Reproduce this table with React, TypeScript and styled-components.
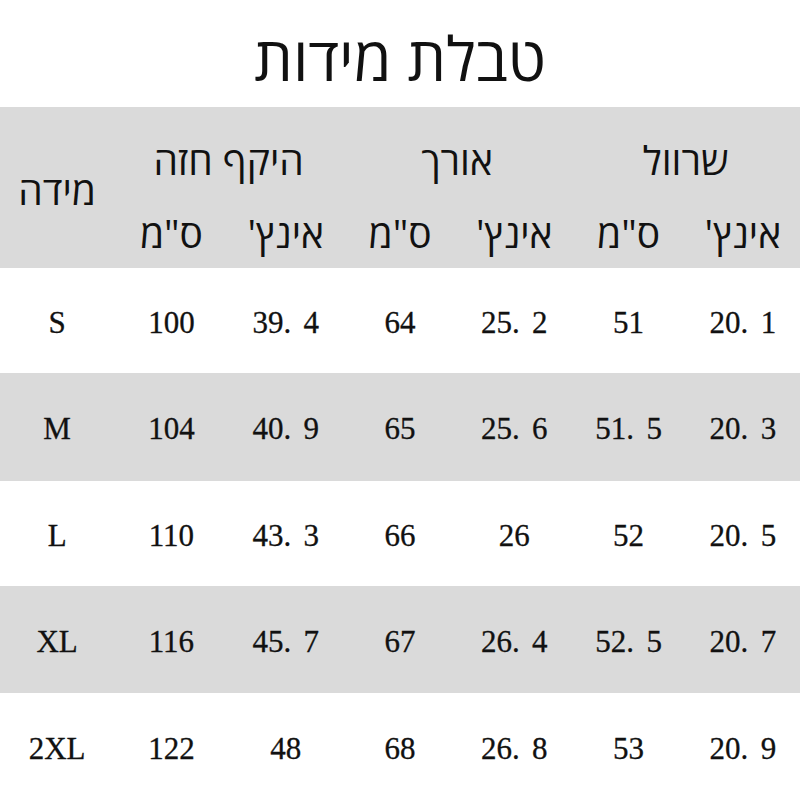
import React from 'react';
import styled, { createGlobalStyle } from 'styled-components';

const GlobalStyle = createGlobalStyle`
  html, body {
    margin: 0;
    padding: 0;
    background: #ffffff;
  }
`;

const Page = styled.div`
  width: 800px;
  height: 800px;
  overflow: hidden;
  display: flex;
  flex-direction: column;
  background: #ffffff;
`;

const Title = styled.h1`
  height: 107px;
  margin: 0;
  display: flex;
  align-items: center;
  justify-content: center;
  font-family: "Open Sans", "DejaVu Sans", sans-serif;
  font-size: 61px;
  font-weight: 400;
  color: #111111;
  direction: rtl;
  padding-top: 8px;
  box-sizing: border-box;
`;

const HeaderBand = styled.div`
  display: grid;
  grid-template-columns: repeat(7, 1fr);
  grid-template-rows: 96px 65px;
  background: #dadada;
`;

const HeadCell = styled.div<{ span?: number; rows?: number }>`
  grid-column: span ${p => p.span || 1};
  grid-row: span ${p => p.rows || 1};
  display: flex;
  align-items: center;
  justify-content: center;
  font-family: "Open Sans", "DejaVu Sans", sans-serif;
  font-size: 39px;
  color: #111111;
  direction: rtl;
  padding-top: ${p => (p.rows ? '4px' : '8px')};
  box-sizing: border-box;
`;

const UnitCell = styled(HeadCell)`
  padding-top: 0;
  padding-bottom: 6px;
`;

const Row = styled.div<{ shaded: boolean; h: number }>`
  display: grid;
  grid-template-columns: repeat(7, 1fr);
  height: ${p => p.h}px;
  align-items: center;
  background: ${p => (p.shaded ? '#dadada' : '#ffffff')};
`;

const Cell = styled.div`
  text-align: center;
  font-family: "Liberation Serif", "Times New Roman", serif;
  font-size: 31px;
  color: #111111;
  -webkit-text-stroke: 0.3px #111111;
  padding-top: 4px;
`;

const Dot = styled.span`
  margin-right: 0.4em;
`;

type SizeRow = { size: string; values: string[]; h: number };

const rows: SizeRow[] = [
  { size: 'S', values: ['100', '39.4', '64', '25.2', '51', '20.1'], h: 105 },
  { size: 'M', values: ['104', '40.9', '65', '25.6', '51.5', '20.3'], h: 108 },
  { size: 'L', values: ['110', '43.3', '66', '26', '52', '20.5'], h: 105 },
  { size: 'XL', values: ['116', '45.7', '67', '26.4', '52.5', '20.7'], h: 107 },
  { size: '2XL', values: ['122', '48', '68', '26.8', '53', '20.9'], h: 107 },
];

const Num: React.FC<{ value: string }> = ({ value }) => {
  const [whole, frac] = value.split('.');
  if (frac === undefined) return <>{value}</>;
  return (
    <>
      {whole}
      <Dot>.</Dot>
      {frac}
    </>
  );
};

export default function App() {
  const units = ['ס"מ', "אינץ'", 'ס"מ', "אינץ'", 'ס"מ', "אינץ'"];
  return (
    <Page>
      <GlobalStyle />
      <Title>טבלת מידות</Title>
      <HeaderBand>
        <HeadCell rows={2}>מידה</HeadCell>
        <HeadCell span={2}>היקף חזה</HeadCell>
        <HeadCell span={2}>אורך</HeadCell>
        <HeadCell span={2}>שרוול</HeadCell>
        {units.map((u, i) => (
          <UnitCell key={i}>{u}</UnitCell>
        ))}
      </HeaderBand>
      {rows.map((r, i) => (
        <Row key={r.size} shaded={i % 2 === 1} h={r.h}>
          <Cell>{r.size}</Cell>
          {r.values.map((v, j) => (
            <Cell key={j}>
              <Num value={v} />
            </Cell>
          ))}
        </Row>
      ))}
    </Page>
  );
}
